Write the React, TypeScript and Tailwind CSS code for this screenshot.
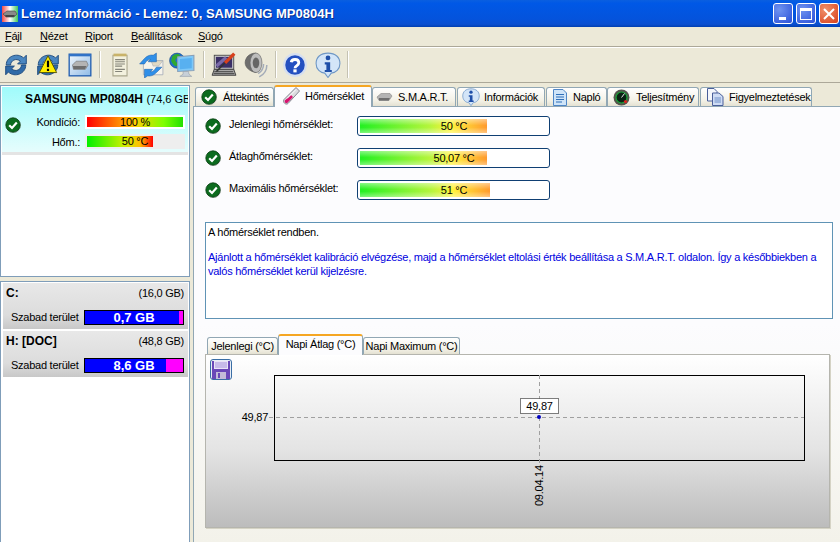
const Check = ({ size = 16 }: { size?: number }) => (
  <svg width={size} height={size} viewBox="0 0 16 16" className="shrink-0">
    <circle cx="8.500" cy="8.500" r="7.500" fill="#8a8a8a" opacity="0.5" />
    <circle cx="8" cy="8" r="7.200" fill="#0c6b1e" stroke="#083f12" strokeWidth="0.8" />
    <path d="M4.200 8.200 7 11 11.800 5.600" fill="none" stroke="#fff" strokeWidth="2.200" />
  </svg>
);

const Arrows = () => (
  <>
    <path d="M3 12C3 4 13 0 19 5.500L21.500 3V11H13.500L16 8.500C12 5 7 8 7 12Z" fill="#4a86c0" stroke="#1f4c80" strokeWidth="0.9" />
    <path d="M21 12C21 20 11 24 5 18.500L2.500 21V13H10.500L8 15.500C12 19 17 16 17 12Z" fill="#2f6aa8" stroke="#1f4c80" strokeWidth="0.9" />
  </>
);

const Ico = ({ children }: { children: React.ReactNode }) => (
  <svg width="26" height="26" viewBox="0 0 24 24" className="-mx-px shrink-0">
    {children}
  </svg>
);

const RefreshIcon = () => <Ico><Arrows /></Ico>;

const WarnIcon = () => (
  <Ico>
    <Arrows />
    <path d="M12 3.500 20 19H4Z" fill="#ffee00" stroke="#4a4a00" strokeWidth="0.8" />
    <rect x="11" y="8" width="2" height="6" fill="#000" />
    <rect x="11" y="15.500" width="2" height="2" fill="#000" />
  </Ico>
);

const DiskBoxIcon = () => (
  <Ico>
    <defs>
      <linearGradient id="dbx" x1="0" y1="0" x2="1" y2="1">
        <stop offset="0" stopColor="#f2f7fc" />
        <stop offset="1" stopColor="#8fbbe6" />
      </linearGradient>
    </defs>
    <rect x="2" y="2" width="20" height="20" fill="url(#dbx)" stroke="#1f5cb0" strokeWidth="1.200" />
    <rect x="2" y="2" width="20" height="2" fill="#2f72c8" />
    <path d="M5 12 8.500 8.500H18L19.500 12 17 16H6Z" fill="#b4b4b4" stroke="#666" strokeWidth="0.5" />
    <path d="M5.500 13H18L16.500 16H6Z" fill="#6d6d6d" />
  </Ico>
);

const NotesIcon = () => (
  <Ico>
    <path d="M5.500 3H18.500V22H5.500Z" fill="#f3f1de" stroke="#a9a68c" />
    <path d="M6 1.500H18V4H6Z" fill="#c9b36a" />
    <path d="M7.500 7H16.500M7.500 9H16.500M7.500 11H16.500M7.500 13H14M7.500 16H16.500M7.500 18H14" stroke="#85857a" strokeWidth="1" />
  </Ico>
);

const MailIcon = () => (
  <Ico>
    <path d="M5 8H23V21H5Z" fill="#f6f3ea" stroke="#9ea7b5" strokeWidth="0.7" />
    <path d="M12 8H23L19 13H14Z" fill="#e0d9c4" stroke="#9ea7b5" strokeWidth="0.5" />
    <path d="M1.500 11 6 6C9 3 12 2.500 14 3L17 1V9H9.500L11.500 6.800C9.500 6.500 8 8 6 11Z" fill="#2f8fe8" stroke="#1c5fa8" strokeWidth="0.5" />
    <path d="M22 14 17 19C14 22 11 22.500 9 22L6 24V16H13.500L11.500 18.200C13.500 18.500 15 17 17 14Z" fill="#2f8fe8" stroke="#1c5fa8" strokeWidth="0.5" />
  </Ico>
);

const GlobeIcon = () => (
  <Ico>
    <circle cx="7.500" cy="8" r="7" fill="#1f6fc8" stroke="#123f7a" strokeWidth="0.5" />
    <path d="M3 4C5 1.500 9 1 10 3S7 5 6 7 8 9 7.500 12 3 11 2 8Z" fill="#2fa82f" />
    <path d="M8 4.500 23 3V17L8 18Z" fill="#7ec8f8" stroke="#8aa0b8" />
    <path d="M10 6.500 21 5.500V15L10 16Z" fill="#58b0f0" />
    <path d="M13 18H18L18.500 20.500 21 22.500H10L13 20.500Z" fill="#c8d0d8" stroke="#8a95a3" strokeWidth="0.5" />
  </Ico>
);

const LaptopIcon = () => (
  <Ico>
    <rect x="3" y="3" width="18" height="13" fill="#c9c9c9" stroke="#444" strokeWidth="0.8" />
    <rect x="4.500" y="4.500" width="15" height="10" fill="#3a2f66" />
    <path d="M5 13 14 5" stroke="#7a6aa8" strokeWidth="3" />
    <path d="M3 16H21L23 21.500H1Z" fill="#a8a8a8" stroke="#333" strokeWidth="0.8" />
    <path d="M3 18.200H20.500M2.500 20H21.500" stroke="#333" strokeWidth="0.8" />
    <path d="M5 18 13 10" stroke="#333" strokeWidth="1.400" />
    <path d="M13 10 21.500 1.500" stroke="#d8401c" strokeWidth="3" />
  </Ico>
);

const SpeakerIcon = () => (
  <Ico>
    <path d="M12 1C5 1 2 6 2 10S6 18 12 19Z" fill="#6e6e6e" stroke="#555" strokeWidth="0.6" />
    <ellipse cx="12" cy="10" rx="5.500" ry="9" fill="#bdbdbd" stroke="#666" strokeWidth="0.6" />
    <ellipse cx="12" cy="10" rx="3" ry="5" fill="#666" />
    <path d="M19 11C19 15 17 18 14 20M22 12C22 17 19 21 15 23" fill="none" stroke="#a4acb8" strokeWidth="1.400" />
  </Ico>
);

const HelpIcon = () => (
  <Ico>
    <circle cx="12" cy="12" r="10" fill="#2450c0" stroke="#d6dff0" strokeWidth="2" />
    <path d="M8.500 9.500C9 6 15.500 6 15.500 10C15.500 12.500 12 12.500 12 15" fill="none" stroke="#fff" strokeWidth="2.600" />
    <rect x="10.500" y="16" width="3" height="2.800" fill="#fff" />
  </Ico>
);

const InfoBalloon = () => (
  <>
    <path d="M12 1C5 1 1 5 1 10.500S5 19.500 9 19.500L12 23.500 15 19.500C19 19.500 23 16 23 10.500S19 1 12 1Z" fill="#d3e5f8" stroke="#6f97c5" />
    <circle cx="12" cy="5.500" r="2.200" fill="#1f4fa8" />
    <path d="M9 9.500H14V16.500H15.500V18.500H9V16.500H10.500V11.500H9Z" fill="#1f4fa8" />
  </>
);

const InfoIcon = () => <Ico><InfoBalloon /></Ico>;

const SmallInfoIcon = () => (
  <svg width="18" height="18" viewBox="0 0 24 24" className="shrink-0">
    <InfoBalloon />
  </svg>
);

const ThermoIcon = () => (
  <svg width="20" height="20" viewBox="0 0 20 20" className="shrink-0">
    <path d="M15 1.500 18.500 5 7 17.500C5 19.500 1 16 3 13.500Z" fill="#dcdce0" stroke="#85858f" />
    <path d="M10 9 3.800 14.500C3 16 5 18 6.500 16.800L12 11Z" fill="#d6136e" />
    <path d="M15 3.500 6 12.500" stroke="#fff" strokeWidth="1" />
  </svg>
);

const SmartIcon = () => (
  <svg width="17" height="10" viewBox="0 0 17 10" className="shrink-0">
    <path d="M1 5 5 1.500H14L16 4 13 8.500H3Z" fill="#b4b4b4" stroke="#777" strokeWidth="0.5" />
    <path d="M3 6H14L12.500 8.500H3Z" fill="#6e6e6e" />
  </svg>
);

const PageIcon = () => (
  <svg width="16" height="17" viewBox="0 0 16 17" className="shrink-0">
    <path d="M1.500 .500H11L14.500 4V16.500H1.500Z" fill="#cfe4f8" stroke="#4f86c6" />
    <path d="M4 5.500H12M4 8H12M4 10.500H12M4 13H10" stroke="#2f6fb8" />
  </svg>
);

const GaugeIcon = () => (
  <svg width="17" height="17" viewBox="0 0 17 17" className="shrink-0">
    <circle cx="8.500" cy="8.500" r="8" fill="#55554c" />
    <circle cx="8.500" cy="8.500" r="5.500" fill="#0a2212" stroke="#18a838" strokeWidth="1.200" />
    <path d="M8.500 8.500 11.500 4.500" stroke="#e8e8e8" />
    <circle cx="12.500" cy="12.500" r="1.600" fill="#d81f1f" />
  </svg>
);

const DocsIcon = () => (
  <svg width="17" height="18" viewBox="0 0 17 18" className="shrink-0">
    <path d="M.500 .500H7L10 3.500V13H.500Z" fill="#f4f6fb" stroke="#4a5f9a" />
    <path d="M5.500 5H12L16 8.500V17.500H5.500Z" fill="#cfdcf4" stroke="#4a5f9a" />
    <path d="M7.500 10H14M7.500 12H14M7.500 14H14" stroke="#6f8fc8" />
  </svg>
);

const SaveIcon = () => (
  <svg width="18" height="18" viewBox="0 0 18 18">
    <path d="M0 0H18V18H0Z" fill="#6a48b8" />
    <path d="M2 0H16V8H2Z" fill="#e9e4f6" />
    <path d="M3 2H15M3 4H15M3 6H15" stroke="#a592dc" />
    <path d="M4 11H14V18H4Z" fill="#c4bcd8" />
    <path d="M6 12H8V17H6Z" fill="#6a48b8" />
  </svg>
);

const Sep = ({ className = "" }: { className?: string }) => (
  <div className={`${className} mx-[7px] h-[27px] w-[2px] border-x border-l-[#c5c2b2] border-r-white`} />
);

const MainTab = ({ icon, label, w, active }: { icon: React.ReactNode; label: string; w: string; active?: boolean }) =>
  active ? (
    <div className={`${w} z-10 -mb-[1px] flex h-[22px] items-center rounded-t-[3px] border-x border-t-[2px] border-x-[#91a7b4] border-t-[#f5a623] bg-[#fcfcfe] pb-[2px]`}>
      {icon}
      <span>{label}</span>
    </div>
  ) : (
    <div className={`${w} flex h-[19px] items-center rounded-t-[3px] border-x border-t border-[#91a7b4] bg-[linear-gradient(#ffffff,#f3f1e6_70%,#e4e1d2)]`}>
      {icon}
      <span>{label}</span>
    </div>
  );

const SubTab = ({ label, w, active }: { label: string; w: string; active?: boolean }) =>
  active ? (
    <div className={`${w} z-10 -mb-[1px] flex h-[21px] justify-center rounded-t-[3px] border-x border-t-[2px] border-x-[#91a7b4] border-t-[#f5a623] bg-[#fcfcfe] leading-[17px]`}>
      {label}
    </div>
  ) : (
    <div className={`${w} flex h-[17px] items-center justify-center rounded-t-[3px] border-x border-t border-[#91a7b4] bg-[linear-gradient(#ffffff,#f3f1e6_70%,#e4e1d2)]`}>
      {label}
    </div>
  );

const TempRow = ({ label, value, fill }: { label: string; value: string; fill: string }) => (
  <div className="flex h-[20px] items-center">
    <Check />
    <span className="ml-[8px] w-[128px] pb-[3px]">{label}</span>
    <div className="relative h-[20px] w-[193px] rounded-[3px] border border-[#0f3f73] bg-white p-[2px]">
      <div className={`${fill} h-[14px] bg-[linear-gradient(rgba(255,255,255,0.45),rgba(255,255,255,0)_45%,rgba(255,255,255,0)_60%,rgba(255,255,255,0.4)),linear-gradient(90deg,#22f022,#b6f53c_55%,#fff23a_72%,#ff9a2e)]`} />
      <span className="absolute left-[59px] top-[1px] w-[74px] text-center">{value}</span>
    </div>
  </div>
);

const DriveCard = ({ name, size, free, fill }: { name: string; size: string; free: string; fill: string }) => (
  <div className="h-[46px] bg-[linear-gradient(#e8e8e8,#dcdcdc_70%,#c8c8c8)] px-[3px]">
    <div className="flex h-[26px] items-start justify-between pr-[1px] leading-[20px]">
      <span className="text-[12px] font-bold tracking-normal">{name}</span>
      <span>{size}</span>
    </div>
    <div className="flex items-center">
      <span className="ml-[5px] w-[73px]">Szabad terület</span>
      <div className="relative flex h-[15px] w-[100px] justify-end border border-black bg-[#0000ff]">
        <div className={`${fill} h-full bg-[#ff00ff]`} />
        <span className="absolute inset-0 text-center text-[13px] font-bold leading-[13px] tracking-normal text-white">{free}</span>
      </div>
    </div>
  </div>
);

export default function App() {
  return (
    <div className="flex h-[542px] w-[840px] flex-col overflow-hidden bg-[#ece9d8] font-['Liberation_Sans',sans-serif] text-[11px] tracking-[-0.25px] text-black">
      {/* title bar */}
      <div className="flex h-[27px] shrink-0 items-center bg-[linear-gradient(#0a5fe0,#0058e6_12%,#0453dc_70%,#0a4fd0_90%,#013fb0)] pl-[2px] pr-[1px]">
        <svg width="16" height="16" viewBox="0 0 16 16" className="shrink-0">
          <defs>
            <linearGradient id="app" x1="0" y1="0" x2="1" y2="0">
              <stop offset="0" stopColor="#f04a4a" />
              <stop offset="0.5" stopColor="#ffffff" />
              <stop offset="1" stopColor="#3fc85a" />
            </linearGradient>
          </defs>
          <rect width="16" height="16" fill="url(#app)" />
          <path d="M1 8 5 5H13L15 8 12 11H4Z" fill="#8a8a8a" stroke="#444" strokeWidth="0.6" />
          <path d="M3 9H13L11.500 11H4Z" fill="#444" />
        </svg>
        <span className="ml-[3px] flex-1 text-[13px] font-bold tracking-normal text-white [text-shadow:1px_1px_#0a2f8f]">
          Lemez Információ - Lemez: 0, SAMSUNG MP0804H
        </span>
        <div className="flex h-[21px] w-[20px] items-end justify-start rounded-[3px] border border-white bg-[radial-gradient(circle_at_30%_30%,#6f93f0,#2a50d8)] pb-[3px] pl-[5px]">
          <div className="h-[3px] w-[7px] bg-white" />
        </div>
        <div className="ml-[3px] flex h-[21px] w-[20px] items-center justify-center rounded-[3px] border border-white bg-[radial-gradient(circle_at_30%_30%,#6f93f0,#2a50d8)]">
          <div className="h-[12px] w-[12px] border border-t-[3px] border-white" />
        </div>
        <div className="ml-[3px] flex h-[21px] w-[20px] items-center justify-center rounded-[3px] border border-white bg-[radial-gradient(circle_at_30%_30%,#f0906a,#d8401c)]">
          <svg width="12" height="12" viewBox="0 0 12 12">
            <path d="M1 1 11 11M11 1 1 11" stroke="#fff" strokeWidth="2" />
          </svg>
        </div>
      </div>
      {/* menu */}
      <div className="flex h-[19px] shrink-0 items-center pl-[5px]">
        <span className="w-[35px]"><u>F</u>ájl</span>
        <span className="w-[45px]"><u>N</u>ézet</span>
        <span className="w-[46px]"><u>R</u>iport</span>
        <span className="w-[67px]"><u>B</u>eállítások</span>
        <span><u>S</u>úgó</span>
      </div>
      {/* toolbar */}
      <div className="flex h-[37px] shrink-0 items-center border-y border-[#aca899] pl-[4px] shadow-[inset_0_1px_#fff]">
        <div className="flex gap-[8px]">
          <RefreshIcon />
          <WarnIcon />
          <DiskBoxIcon />
        </div>
        <Sep />
        <div className="flex gap-[7px]">
          <NotesIcon />
          <MailIcon />
          <GlobeIcon />
        </div>
        <Sep className="ml-[9px]" />
        <div className="flex gap-[8px]">
          <LaptopIcon />
          <SpeakerIcon />
        </div>
        <Sep />
        <div className="-ml-px flex gap-[9px]">
          <HelpIcon />
          <InfoIcon />
        </div>
        <Sep />
      </div>

      <div className="flex min-h-0 flex-1 bg-[#ece9d8]">
        {/* left column */}
        <div className="flex w-[190px] shrink-0 flex-col gap-[4px] pt-[2px]">
          <div className="h-[192px] border border-[#7f9db9] bg-white p-[1px]">
            <div className="h-[68px] overflow-hidden border-b-[3px] border-[#e4e4e4] bg-[linear-gradient(#9ffbfb,#e6fdfd)]">
              <div className="whitespace-nowrap pl-[23px] pt-[3px] text-[12px] font-bold tracking-normal">
                SAMSUNG MP0804H <span className="text-[11px] font-normal">(74,6 GB)</span>
              </div>
              <div className="mt-[7px] flex leading-[14px]">
                <div className="pl-[3px] pt-[2px]"><Check /></div>
                <div className="ml-[5px] flex flex-col gap-[5px]">
                  <div className="flex items-center">
                    <span className="w-[55px] pr-[1px] text-right">Kondíció:</span>
                    <div className="relative ml-[4px] h-[14px] w-[100px] bg-white p-[2px]">
                      <div className="h-[10px] bg-[linear-gradient(90deg,#ff0000,#ffd000_50%,#7dff00_80%,#22e000)]" />
                      <span className="absolute inset-0 text-center leading-[14px]">100 %</span>
                    </div>
                  </div>
                  <div className="flex items-center">
                    <span className="w-[55px] pr-[1px] text-right">Hőm.:</span>
                    <div className="relative ml-[4px] h-[15px] w-[100px] bg-[#eeeeee] p-[2px]">
                      <div className="h-[11px] w-[66px] bg-[linear-gradient(90deg,#00f000,#c8f000_55%,#ffc000_80%,#ff0000)]" />
                      <span className="absolute inset-0 text-center leading-[15px]">50 °C</span>
                    </div>
                  </div>
                </div>
              </div>
            </div>
          </div>
          <div className="flex-1 border border-b-0 border-[#7f9db9] bg-white py-[1px] pl-[2px] pr-[1px]">
            <div className="flex flex-col gap-[2px]">
              <DriveCard name="C:" size="(16,0 GB)" free="0,7 GB" fill="w-[4px]" />
              <DriveCard name="H: [DOC]" size="(48,8 GB)" free="8,6 GB" fill="w-[17px]" />
            </div>
          </div>
        </div>

        {/* right column */}
        <div className="flex min-w-0 flex-1 flex-col pt-[1px]">
          <div className="flex h-[22px] items-end pl-[5px]">
            <MainTab icon={<span className="ml-[5px] mr-[6px]"><Check /></span>} label="Áttekintés" w="w-[79px]" />
            <MainTab active icon={<span className="ml-[6px] mr-[4px]"><ThermoIcon /></span>} label="Hőmérséklet" w="w-[98px]" />
            <MainTab icon={<span className="ml-[3px] mr-[5px]"><SmartIcon /></span>} label="S.M.A.R.T." w="w-[84px]" />
            <MainTab icon={<span className="ml-[4px] mr-[4px]"><SmallInfoIcon /></span>} label="Információk" w="ml-[1px] w-[88px]" />
            <MainTab icon={<span className="ml-[5px] mr-[5px]"><PageIcon /></span>} label="Napló" w="ml-[1px] w-[61px]" />
            <MainTab icon={<span className="ml-[5px] mr-[6px]"><GaugeIcon /></span>} label="Teljesítmény" w="w-[92px]" />
            <MainTab icon={<span className="ml-[6px] mr-[5px]"><DocsIcon /></span>} label="Figyelmeztetések" w="ml-[1px] w-[112px]" />
          </div>
          <div className="ml-[3px] flex-1 border-l border-t border-[#91a7b4] bg-[linear-gradient(#fcfcfe,#fcfcfe_50%,#f3f2ea)] pl-[11px] pt-[9px]">
            <div className="flex flex-col gap-[12px]">
              <TempRow label="Jelenlegi hőmérséklet:" value="50 °C" fill="w-[127px]" />
              <TempRow label="Átlaghőmérséklet:" value="50,07 °C" fill="w-[127px]" />
              <TempRow label="Maximális hőmérséklet:" value="51 °C" fill="w-[130px]" />
            </div>
            <div className="mt-[22px] h-[97px] w-[628px] border border-[#5f93b5] bg-white px-[2px] pt-[2px] leading-[14px]">
              <div>A hőmérséklet rendben.</div>
              <div className="mt-[11px] text-[#0000e0]">
                Ajánlott a hőmérséklet kalibráció elvégzése, majd a hőmérséklet eltolási érték beállítása a S.M.A.R.T. oldalon. Így a későbbiekben a valós hőmérséklet kerül kijelzésre.
              </div>
            </div>
            <div className="mt-[15px] flex h-[20px] items-end pl-[2px]">
              <SubTab label="Jelenlegi (°C)" w="w-[71px]" />
              <SubTab active label="Napi Átlag (°C)" w="w-[85px]" />
              <SubTab label="Napi Maximum (°C)" w="w-[97px]" />
            </div>
            <div className="relative h-[174px] w-[625px] border border-[#b5b5ae] bg-[linear-gradient(#ffffff,#e4e4e4_55%,#bcbcbc)] shadow-[1px_1px_#d5d3c5]">
              <div className="absolute left-[4px] top-[4px] flex h-[21px] w-[22px] items-center justify-center rounded-[3px] border border-[#3a6ea5] bg-[#e8eef6]">
                <SaveIcon />
              </div>
              <svg width="623" height="172" className="block" fontFamily="Liberation Sans, sans-serif" fontSize="11">
                <rect x="68.500" y="20.500" width="530" height="85" fill="none" stroke="#000" />
                <path d="M63 62.500H598M333.500 20V110" stroke="#a0a0a0" strokeDasharray="4 3" fill="none" />
                <text x="62" y="66" textAnchor="end" fill="#000">49,87</text>
                <rect x="314.500" y="43.500" width="38" height="15" fill="#fff" stroke="#000" strokeDasharray="1 1" />
                <text x="333.500" y="55" textAnchor="middle" fill="#000">49,87</text>
                <circle cx="333" cy="62" r="2" fill="#0000c0" />
                <text transform="translate(337 151) rotate(-90)" fill="#000">09.04.14</text>
              </svg>
            </div>
          </div>
        </div>
      </div>
    </div>
  );
}
